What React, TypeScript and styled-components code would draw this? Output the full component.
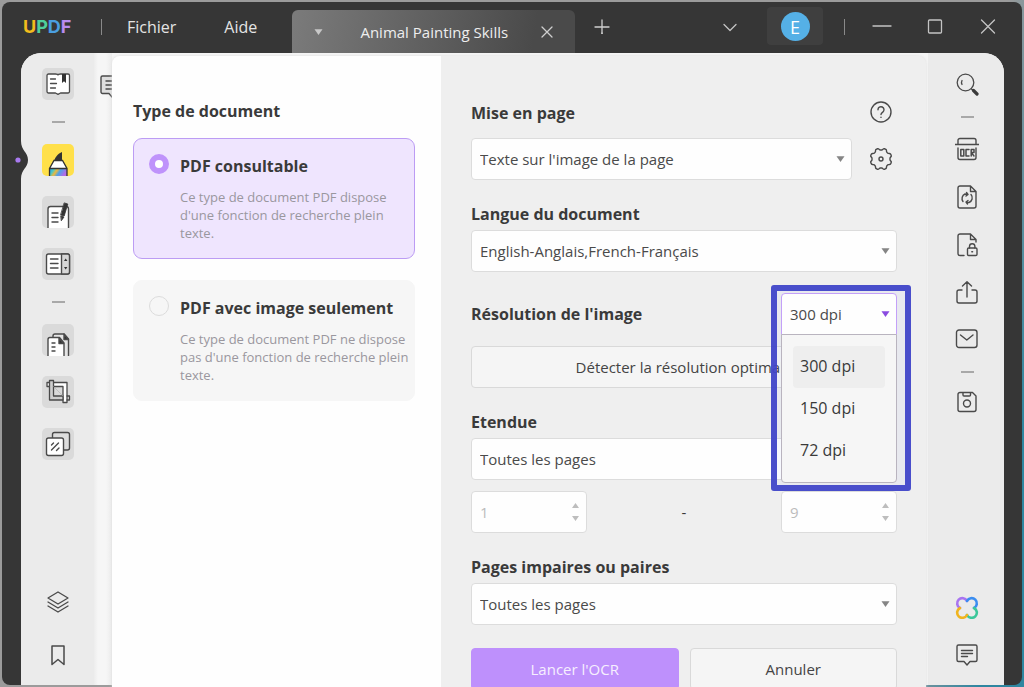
import React from "react";
import styled, { createGlobalStyle, css } from "styled-components";

const GlobalStyle = createGlobalStyle`
  *, *::before, *::after { box-sizing: border-box; }
  html, body { margin: 0; height: 100%; overflow: hidden; }
  body { font-family: "Open Sans", "Noto Sans", sans-serif; font-size: 15px; color: #3a3a3a; }
  button, select, input { font: inherit; color: inherit; margin: 0; }
  svg { display: block; }
`;

/* ---------- window ---------- */

const Desktop = styled.div`
  height: 100vh;
  padding: 2px;
  background: linear-gradient(100deg, #9b9b9b 0 88%, #2f86a0 96%);
`;

const AppWindow = styled.div`
  height: 100%;
  display: flex;
  flex-direction: column;
  background: #363636;
  border-radius: 8px;
`;

const TitleBar = styled.header`
  display: flex;
  align-items: stretch;
  height: 51px;
  flex: none;
  padding: 0 14px 0 21px;
  color: #e4e4e4;
`;

const Logo = styled.div`
  width: 53px;
  font-family: Inter, sans-serif;
  font-weight: 700;
  font-size: 18px;
  line-height: 50px;
`;

const LogoLetter = styled.span<{ $color: string }>`
  color: ${(p) => p.$color};
`;

const BarDivider = styled.span`
  width: 1px;
  height: 16px;
  margin: 17px 25px 0;
  background: #8a8a8a;
`;

const Menu = styled.nav`
  display: flex;
  gap: 48px;
  height: 50px;
`;

const bare = css`
  border: 0;
  padding: 0;
  background: none;
  cursor: pointer;
`;

const MenuButton = styled.button`
  ${bare}
  font-size: 16px;
`;

const Tab = styled.div`
  display: flex;
  align-items: center;
  width: 283px;
  margin: 8px 0 0 35px;
  padding: 0 22px;
  border-radius: 6px 6px 0 0;
  background: linear-gradient(100deg, #7b7b7b, #4a4a4a 85%);
`;

const TabTitle = styled.span`
  flex: 1;
  padding-left: 5px;
  text-align: center;
  white-space: nowrap;
  color: #eeeeee;
`;

const BarButton = styled.button<{ $w: number }>`
  ${bare}
  width: ${(p) => p.$w}px;
  height: 48px;
  display: grid;
  place-items: center;
`;

const TabButton = styled(BarButton)`
  height: 42px;
`;

const Spacer = styled.div`
  flex: 1;
`;

const Account = styled.button`
  ${bare}
  width: 56px;
  height: 38px;
  margin: 5px 0 0 20px;
  border-radius: 4px;
  background: #3f3f3f;
  display: grid;
  place-items: center;
`;

const Avatar = styled.span`
  width: 29px;
  height: 29px;
  border-radius: 50%;
  background: #55b0e6;
  color: #ffffff;
  font-size: 18px;
  line-height: 30px;
`;

const WindowDivider = styled(BarDivider)`
  margin: 17px 17px 0 21px;
`;

const WindowControls = styled.div`
  display: flex;
  gap: 13px;
`;

/* ---------- body ---------- */

const Body = styled.div`
  flex: 1;
  min-height: 0;
  display: flex;
  margin: 0 18px 0 19px;
  border-radius: 20px 20px 0 0;
  background: #f5f5f5;
  position: relative;
`;

const Rail = styled.aside<{ $side: "left" | "right" }>`
  flex: none;
  display: flex;
  flex-direction: column;
  align-items: center;
  background: #ebebeb;
  ${(p) =>
    p.$side === "left"
      ? css`
          width: 73px;
          padding: 15px 0 18px 1px;
          gap: 20px;
          border-top-left-radius: 20px;
        `
      : css`
          width: 76px;
          margin-left: 2px;
          padding: 20px 0 18px 2px;
          gap: 24px;
          border-top-right-radius: 20px;
        `}
`;

const RailGroup = styled.div`
  display: flex;
  flex-direction: column;
  gap: 29px;
`;

const RailDivider = styled.hr<{ $pull?: number }>`
  width: 13px;
  height: 2px;
  flex: none;
  margin: ${(p) => (p.$pull ? -p.$pull : 1)}px 0;
  border: 0;
  background: #a8a8a8;
`;

const Tile = styled.button<{ $bg?: string }>`
  ${bare}
  flex: none;
  width: 32px;
  height: 32px;
  border-radius: 5px;
  background: ${(p) => p.$bg ?? "#dadada"};
  overflow: hidden;
`;

const RailButton = styled.button`
  ${bare}
  flex: none;
  width: 24px;
  height: 24px;
`;

const Notch = styled.button`
  ${bare}
  position: absolute;
  left: -7px;
  top: 88px;
  width: 16px;
  height: 38px;
`;

const DocStrip = styled.div`
  flex: none;
  width: 18px;
  padding: 21px 0 0 6px;
  overflow: hidden;
  background: linear-gradient(90deg, #ededed, #f6f6f6 4px 12px, #ececec);
`;

/* ---------- dialog ---------- */

const Dialog = styled.main`
  flex: 1;
  min-width: 0;
  display: grid;
  grid-template-columns: 329fr 485fr;
  margin: 3px 0 -2px;
  border-radius: 8px 8px 0 0;
  background: #efefef;
  box-shadow: 0 0 3px #dedede;
  z-index: 1;
`;

const TypePane = styled.section`
  min-width: 0;
  padding: 43px 26px 0 21px;
  background: #fefefe;
  border-top-left-radius: 8px;
`;

const FormPane = styled.form`
  min-width: 0;
  padding: 45px 29px 0 30px;
`;

const heading = css`
  display: block;
  margin: 0;
  font-size: 16px;
  font-weight: 700;
  line-height: 24px;
  color: #3a3a3a;
  white-space: nowrap;
`;

const Title = styled.h2`
  ${heading}
`;

const Label = styled.label`
  ${heading}
`;

const Card = styled.label<{ $selected?: boolean }>`
  display: flex;
  align-items: flex-start;
  gap: 11px;
  height: 121px;
  margin-top: 21px;
  padding: 15px 5px 0 15px;
  border: 1px solid ${(p) => (p.$selected ? "#bc9cf4" : "#f6f6f6")};
  border-radius: 9px;
  background: ${(p) => (p.$selected ? "#efe5fe" : "#f6f6f6")};
  cursor: pointer;
`;

const FirstCard = styled(Card)`
  margin-top: 15px;
`;

const Radio = styled.input`
  appearance: none;
  flex: none;
  width: 20px;
  height: 20px;
  border: 1px solid #dcdcdc;
  border-radius: 50%;
  &:checked {
    border: 6px solid #bf93fb;
    background: #ffffff;
  }
`;

const CardText = styled.span`
  min-width: 0;
`;

const CardTitle = styled.span`
  ${heading}
`;

const CardNote = styled.span`
  display: block;
  margin-top: 10px;
  font-size: 13px;
  line-height: 18px;
  color: #9a979e;
`;

const Row = styled.div<{ $top?: number }>`
  display: flex;
  align-items: center;
  justify-content: space-between;
  gap: 11px;
  margin-top: ${(p) => p.$top ?? 0}px;
`;

const Field = styled.div`
  margin-top: 22px;
`;

const IconButton = styled.button`
  ${bare}
  flex: none;
  width: 24px;
  height: 24px;
  margin: 0 4px 0 6px;
`;

const boxed = css`
  width: 100%;
  height: 42px;
  border: 1px solid #dcdcdc;
  border-radius: 4px;
  background: #fefefe;
`;

const SelectWrap = styled.div<{ $top?: number; $w?: number; $raised?: boolean }>`
  display: grid;
  align-items: center;
  flex: ${(p) => (p.$w ? "none" : 1)};
  ${(p) => p.$w && `width: ${p.$w}px;`}
  margin-top: ${(p) => p.$top ?? 0}px;
  position: relative;
  z-index: ${(p) => (p.$raised ? 2 : "auto")};
  > select, > input, > svg { grid-area: 1 / 1; position: relative; }
  > svg { justify-self: end; margin-right: 7px; pointer-events: none; }
`;

const Select = styled.select<{ $open?: boolean }>`
  ${boxed}
  appearance: none;
  padding: 0 24px 0 8px;
  color: #4a4a4a;
  ${(p) =>
    p.$open &&
    css`
      border-color: #c3a0f8;
      border-radius: 4px 4px 0 0;
    `}
`;

const NumberInput = styled.input`
  ${boxed}
  padding: 0 24px 0 8px;
  color: #bcbcbc;
`;

const Button = styled.button<{ $primary?: boolean; $top?: number }>`
  ${boxed}
  margin-top: ${(p) => p.$top ?? 0}px;
  background: ${(p) => (p.$primary ? "#be90fc" : "#f5f5f5")};
  border-color: ${(p) => (p.$primary ? "#be90fc" : "#d9d9d9")};
  color: ${(p) => (p.$primary ? "#f6effe" : "#444444")};
  cursor: pointer;
`;

const Highlight = styled.div`
  position: absolute;
  inset: -8px -14px -156px -10px;
  border: 6px solid #3f44c8f2;
  border-radius: 3px;
  background: #4060ff0a;
  pointer-events: none;
`;

const Popup = styled.ul`
  position: absolute;
  top: 41px;
  left: 0;
  right: 0;
  margin: 0;
  padding: 11px;
  height: 149px;
  list-style: none;
  border: 1px solid #b9b4bf;
  border-radius: 0 0 4px 4px;
  background: #f6f6f6;
`;

const Option = styled.li<{ $active?: boolean }>`
  height: 42px;
  padding-left: 7px;
  border-radius: 4px;
  font-size: 16px;
  line-height: 40px;
  background: ${(p) => (p.$active ? "#eeeeee" : "transparent")};
`;

/* ---------- glyphs ---------- */

const Caret = ({ color = "#858585" }: { color?: string }) => (
  <svg width="9" height="6" viewBox="0 0 9 6">
    <path d="M.5 .3h8L4.500 6z" fill={color} />
  </svg>
);

const Spin = () => (
  <svg width="9" height="20" viewBox="0 0 9 20">
    <path d="M1 6h7L4.500 1zM1 14h7l-3.500 5z" fill="#bdbdbd" />
  </svg>
);

const Line = ({
  size = 24,
  width = 1.3,
  color = "#4a4a4a",
  children,
}: {
  size?: number;
  width?: number;
  color?: string;
  children: React.ReactNode;
}) => (
  <svg
    width={size}
    height={size}
    viewBox={`0 0 ${size} ${size}`}
    fill="none"
    stroke={color}
    strokeWidth={width}
    strokeLinecap="round"
    strokeLinejoin="round"
  >
    {children}
  </svg>
);

const ReaderIcon = () => (
  <Line size={32}>
    <path d="M6.500 6h7q2.500 0 2.500 1 0-1 2.500-1H26a1.500 1.500 0 0 1 1.500 1.500v16A1.500 1.500 0 0 1 26 25h-7.500L16 26.300 13.500 25h-7A1.500 1.500 0 0 1 5 23.500v-16A1.500 1.500 0 0 1 6.500 6z" fill="#fff" />
    <path d="M8.500 11h5M8.500 15.500h6M8.500 20h5" />
    <path d="M20 6h4v9l-2-1.700L20 15z" fill="#333" stroke="none" />
  </Line>
);

const MarkerIcon = () => (
  <svg width="32" height="32" viewBox="0 0 32 32">
    <defs>
      <linearGradient id="ink" x1="0" y1="0" x2="1" y2="0.3">
        <stop offset="0" stopColor="#2f8fe6" />
        <stop offset=".25" stopColor="#45c9c9" />
        <stop offset=".45" stopColor="#f0b83a" />
        <stop offset=".65" stopColor="#4da3e8" />
        <stop offset="1" stopColor="#b26be8" />
      </linearGradient>
    </defs>
    <path d="M7.500 24.500h17.500V32H7.500z" fill="url(#ink)" />
    <path d="M12 16.500h8.500l4.500 8H7.500z" fill="#fff" />
    <path d="M7.500 32v-7.500l4.500-8h8.500l4.500 8V32M7.500 24.500H25" fill="none" stroke="#333" strokeWidth="1.300" />
    <path d="M12 17c1-3.500 4-7.500 8-9v9z" fill="#333" />
  </svg>
);

const EditIcon = () => (
  <Line size={32} width={1.4}>
    <path d="M6 33V13a2.500 2.500 0 0 1 2.500-2.500H24a2.500 2.500 0 0 1 2.500 2.500v20" fill="#fff" />
    <path d="M10 17h6M10 21.500h6M10 26h6" />
    <path d="M22.500 7l3.300 1-3.600 12-3.300-1zM19 20l3 1-2.500 3.500z" fill="#333" stroke="#333" strokeWidth=".8" />
  </Line>
);

const FormIcon = () => (
  <Line size={32} width={1.4}>
    <rect x="4.500" y="6" width="23" height="20" rx="2" fill="#fff" />
    <path d="M19.500 6h6a2 2 0 0 1 2 2v16a2 2 0 0 1-2 2h-6z" fill="#d6d6d6" />
    <path d="M8.500 11h7.500M8.500 15.500h7.500M8.500 20h7.500" />
    <path d="M22 13l1.700-2.500 1.700 2.500zM22 19l1.700 2.500 1.700-2.500z" fill="#333" stroke="none" />
  </Line>
);

const PagesIcon = () => (
  <Line size={32} width={1.4}>
    <path d="M11 13V12a2 2 0 0 1 2-2h9l4.500 5v18H11z" fill="#e4e4e4" />
    <path d="M22 10l4.500 5.500H22z" fill="#333" />
    <path d="M6 33V15.500a2 2 0 0 1 2-2h9.500l4.500 5.500v14" fill="#fff" />
    <path d="M17 14l4.500 5.500H17z" fill="#333" />
    <path d="M10 19h3M10 23h3M10 27h3" />
  </Line>
);

const CropIcon = () => (
  <Line size={32} width={1.3}>
    <path d="M5 6.500h20v20h-4V10.500H5z" fill="#fff" />
    <path d="M25 20h2.500v4H25" />
    <path d="M7.500 4.500h4V20H21v4H7.500z" fill="#cfcfcf" />
    <path d="M11.500 10.500l9.500 9.500" strokeWidth=".6" stroke="#b0b0b0" />
  </Line>
);

const StampIcon = () => (
  <Line size={32} width={1.4}>
    <rect x="10.500" y="4.500" width="17" height="17.500" rx="2" fill="#ddd" />
    <rect x="4.500" y="10" width="17" height="17.500" rx="2" fill="#fff" />
    <path d="M9.500 17l2-2M9.500 22l7-7M14.500 22.500l2.500-2.500" />
  </Line>
);

const LayersIcon = () => (
  <Line>
    <path d="M12 2L22 8l-10 6L2 8zM2 12l10 6 10-6M2 16l10 6 10-6" />
  </Line>
);

const BookmarkIcon = () => (
  <Line width={1.5}>
    <path d="M6 3h12v18.500l-6-5-6 5z" />
  </Line>
);

const CommentIcon = () => (
  <Line width={1.4}>
    <path d="M3.500 2h17a1.500 1.500 0 0 1 1.500 1.500v13.500a1.500 1.500 0 0 1-1.500 1.500H15l-3 3.500-3-3.500H3.500A1.500 1.500 0 0 1 2 17V3.500A1.500 1.500 0 0 1 3.500 2zM6.500 7.500h11M6.500 10.500h11M6.500 13.500h6" />
  </Line>
);

const StripIcon = () => (
  <Line width={1.4}>
    <path d="M2.500 2H20v18h-5l-3 3-3-3.500H2.500A1.500 1.500 0 0 1 1 18V3.500A1.500 1.500 0 0 1 2.500 2z" fill="#dedede" />
    <path d="M6 7h9M6 11h9M6 15h9" />
  </Line>
);

const SearchIcon = () => (
  <Line>
    <circle cx="10.500" cy="9.500" r="8.300" />
    <path d="M7 7.500q-1 2 0 4" />
    <path d="M16.500 16l2 2" />
    <path d="M18.500 17.500l3.500 3.500" strokeWidth="3.200" stroke="#3a3a3a" />
  </Line>
);

const OcrIcon = () => (
  <Line width={1.4}>
    <path d="M3 7.500v-4A2 2 0 0 1 5 1.500h14a2 2 0 0 1 2 2v4M0 7.500h24M3 11v9.500a2 2 0 0 0 2 2h14a2 2 0 0 0 2-2V11" />
    <path d="M5.800 12.500h3v6.500h-3zM14 12.500h-3v6.500h3M16.200 19v-6.500H19v3h-2.800l2.800 3.500" strokeWidth="1.500" />
  </Line>
);

const ConvertIcon = () => (
  <Line width={1.4}>
    <path d="M5 1h10.500L21 6.500V21a2 2 0 0 1-2 2H5a2 2 0 0 1-2-2V3a2 2 0 0 1 2-2zM15.500 1v5.500H21" />
    <path d="M8 16.500a5 5 0 0 1 2-7.500l3 .5M16 9.500a5 5 0 0 1-2 8l-3-.5M11.500 7.500l1.500 2-2 1.500M12.500 19L11 17l2-1.500" />
  </Line>
);

const ProtectIcon = () => (
  <Line width={1.4}>
    <path d="M9 22.500H5a2 2 0 0 1-2-2V3a2 2 0 0 1 2-2h10.500L21 6.500V9M15.500 1v5.500H21" />
    <rect x="12.500" y="15" width="9.500" height="7.500" rx="1.200" />
    <path d="M14.500 15v-1.500a2.700 2.700 0 0 1 5.400 0V15M16.800 18.700h.8" />
  </Line>
);

const ShareIcon = () => (
  <Line width={1.4}>
    <path d="M7 9H4a2 2 0 0 0-2 2v9a2 2 0 0 0 2 2h16a2 2 0 0 0 2-2v-9a2 2 0 0 0-2-2h-3M12 16V1M7.500 5L12 .8 16.500 5" />
  </Line>
);

const MailIcon = () => (
  <Line width={1.4}>
    <rect x="1.500" y="1" width="20.500" height="17.500" rx="2.500" />
    <path d="M5.500 6l6.300 5 6.200-5" />
  </Line>
);

const SaveIcon = () => (
  <Line width={1.4}>
    <path d="M5 1.500h12.500L21 5v13.500a2 2 0 0 1-2 2H5a2 2 0 0 1-2-2v-15a2 2 0 0 1 2-2zM8 1.500V4a1 1 0 0 0 1 1h5.500a1 1 0 0 0 1-1V1.500" />
    <circle cx="12" cy="12.500" r="3.500" />
  </Line>
);

const CloverIcon = () => (
  <Line width={2.6}>
    <path d="M5 13A5.200 5.200 0 1 1 12 6" stroke="#a874f0" />
    <path d="M12 6A5.200 5.200 0 1 1 19 13" stroke="#3b8df0" />
    <path d="M19 13A5.200 5.200 0 1 1 12 20" stroke="#3cc79a" />
    <path d="M12 20A5.200 5.200 0 1 1 5 13" stroke="#f0b41e" />
  </Line>
);

const HelpIcon = () => (
  <Line width={1.4}>
    <circle cx="12" cy="11" r="10" />
    <path d="M9 8.800a3 3 0 1 1 4.800 2.300c-1.100.8-1.800 1.300-1.800 2.400M12 16.200v.2" />
  </Line>
);

const gearPath = (() => {
  const points = Array.from({ length: 96 }, (_, i) => {
    const a = (i / 96) * Math.PI * 2;
    const r = 9.9 + 0.95 * Math.tanh(2 * Math.cos(8 * a + Math.PI));
    return `${(12 + r * Math.cos(a)).toFixed(2)} ${(12 + r * Math.sin(a)).toFixed(2)}`;
  });
  return `M${points.join("L")}Z`;
})();

const GearIcon = () => (
  <Line width={1.4}>
    <path d={gearPath} />
    <circle cx="12" cy="12" r="2" />
  </Line>
);

/* ---------- page ---------- */

export default function App() {
  return (
    <>
      <GlobalStyle />
      <Desktop>
        <AppWindow>
          <TitleBar>
            <Logo>
              <LogoLetter $color="#f2bd1d">U</LogoLetter>
              <LogoLetter $color="#4fcf9b">P</LogoLetter>
              <LogoLetter $color="#4a9fe0">D</LogoLetter>
              <LogoLetter $color="#b98cf0">F</LogoLetter>
            </Logo>
            <BarDivider />
            <Menu>
              <MenuButton>Fichier</MenuButton>
              <MenuButton>Aide</MenuButton>
            </Menu>
            <Tab>
              <Caret color="#c8c8c8" />
              <TabTitle>Animal Painting Skills</TabTitle>
              <TabButton $w={13} aria-label="Fermer l'onglet">
                <Line size={12} color="#cfcfcf">
                  <path d="M1 1l10 10M11 1L1 11" />
                </Line>
              </TabButton>
            </Tab>
            <BarButton $w={54} aria-label="Nouvel onglet">
              <Line size={16} color="#cfcfcf">
                <path d="M8 1v14M1 8h14" transform="translate(0 1)" />
                <path d="M8 15v2" />
              </Line>
            </BarButton>
            <Spacer />
            <BarButton $w={34} aria-label="Plus">
              <Line size={16} color="#c4c4c4">
                <path d="M2 6.500l6 6 6-6" />
              </Line>
            </BarButton>
            <Account aria-label="Compte">
              <Avatar>E</Avatar>
            </Account>
            <WindowDivider />
            <WindowControls>
              <BarButton $w={40} aria-label="Réduire">
                <Line size={20} color="#c4c4c4">
                  <path d="M1 10h18" />
                </Line>
              </BarButton>
              <BarButton $w={40} aria-label="Agrandir">
                <Line size={16} color="#c4c4c4">
                  <rect x="1.500" y="2" width="13" height="13" rx="1" />
                </Line>
              </BarButton>
              <BarButton $w={40} aria-label="Fermer">
                <Line size={16} color="#c4c4c4">
                  <path d="M1.500 2l13 13M14.500 2l-13 13" />
                </Line>
              </BarButton>
            </WindowControls>
          </TitleBar>

          <Body>
            <Rail $side="left">
              <Tile aria-label="Lecteur"><ReaderIcon /></Tile>
              <RailDivider />
              <Tile $bg="#ffe04a" aria-label="Commentaire"><MarkerIcon /></Tile>
              <Tile aria-label="Modifier"><EditIcon /></Tile>
              <Tile aria-label="Formulaire"><FormIcon /></Tile>
              <RailDivider />
              <Tile aria-label="Pages"><PagesIcon /></Tile>
              <Tile aria-label="Rogner"><CropIcon /></Tile>
              <Tile aria-label="Filigrane"><StampIcon /></Tile>
              <Spacer />
              <RailGroup>
                <RailButton aria-label="Calques"><LayersIcon /></RailButton>
                <RailButton aria-label="Signets"><BookmarkIcon /></RailButton>
              </RailGroup>
            </Rail>
            <DocStrip>
              <StripIcon />
            </DocStrip>

            <Dialog>
              <TypePane>
                <Title>Type de document</Title>
                <FirstCard $selected>
                  <Radio type="radio" name="type" defaultChecked />
                  <CardText>
                    <CardTitle>PDF consultable</CardTitle>
                    <CardNote>Ce type de document PDF dispose d'une fonction de recherche plein texte.</CardNote>
                  </CardText>
                </FirstCard>
                <Card>
                  <Radio type="radio" name="type" />
                  <CardText>
                    <CardTitle>PDF avec image seulement</CardTitle>
                    <CardNote>Ce type de document PDF ne dispose pas d'une fonction de recherche plein texte.</CardNote>
                  </CardText>
                </Card>
              </TypePane>

              <FormPane onSubmit={(e) => e.preventDefault()}>
                <Row>
                  <Label htmlFor="layout">Mise en page</Label>
                  <IconButton type="button" aria-label="Aide"><HelpIcon /></IconButton>
                </Row>
                <Row $top={13}>
                  <SelectWrap>
                    <Select id="layout">
                      <option>Texte sur l'image de la page</option>
                    </Select>
                    <Caret />
                  </SelectWrap>
                  <IconButton type="button" aria-label="Paramètres"><GearIcon /></IconButton>
                </Row>

                <Field>
                  <Label htmlFor="language">Langue du document</Label>
                  <SelectWrap $top={4}>
                    <Select id="language">
                      <option>English-Anglais,French-Français</option>
                    </Select>
                    <Caret />
                  </SelectWrap>
                </Field>

                <Row $top={21}>
                  <Label htmlFor="dpi">Résolution de l'image</Label>
                  <SelectWrap $w={116} $raised>
                    <Highlight />
                    <Select id="dpi" $open>
                      <option>300 dpi</option>
                    </Select>
                    <Caret color="#8a4be0" />
                    <Popup role="listbox" aria-label="Résolution">
                      <Option role="option" aria-selected $active>300 dpi</Option>
                      <Option role="option">150 dpi</Option>
                      <Option role="option">72 dpi</Option>
                    </Popup>
                  </SelectWrap>
                </Row>
                <Button type="button" $top={11}>Détecter la résolution optimale</Button>

                <Field>
                  <Label htmlFor="range">Etendue</Label>
                  <SelectWrap $top={4}>
                    <Select id="range">
                      <option>Toutes les pages</option>
                    </Select>
                    <Caret />
                  </SelectWrap>
                </Field>
                <Row $top={11}>
                  <SelectWrap $w={116}>
                    <NumberInput aria-label="Première page" defaultValue="1" />
                    <Spin />
                  </SelectWrap>
                  <span>-</span>
                  <SelectWrap $w={116}>
                    <NumberInput aria-label="Dernière page" defaultValue="9" />
                    <Spin />
                  </SelectWrap>
                </Row>

                <Field>
                  <Label htmlFor="parity">Pages impaires ou paires</Label>
                  <SelectWrap $top={4}>
                    <Select id="parity">
                      <option>Toutes les pages</option>
                    </Select>
                    <Caret />
                  </SelectWrap>
                </Field>

                <Row $top={23}>
                  <Button type="submit" $primary>Lancer l'OCR</Button>
                  <Button type="button">Annuler</Button>
                </Row>
              </FormPane>
            </Dialog>

            <Rail $side="right">
              <RailButton aria-label="Rechercher"><SearchIcon /></RailButton>
              <RailDivider $pull={5} />
              <RailButton aria-label="OCR"><OcrIcon /></RailButton>
              <RailButton aria-label="Convertir"><ConvertIcon /></RailButton>
              <RailButton aria-label="Protéger"><ProtectIcon /></RailButton>
              <RailButton aria-label="Partager"><ShareIcon /></RailButton>
              <RailButton aria-label="Courriel"><MailIcon /></RailButton>
              <RailDivider $pull={6} />
              <RailButton aria-label="Enregistrer"><SaveIcon /></RailButton>
              <Spacer />
              <RailButton aria-label="UPDF AI"><CloverIcon /></RailButton>
              <RailButton aria-label="Commentaires"><CommentIcon /></RailButton>
            </Rail>

            <Notch aria-label="Masquer la barre">
              <svg width="16" height="38" viewBox="0 0 16 38">
                <path d="M6 0h1c0 10 7 11 7 19s-7 9-7 19H6z" fill="#363636" />
                <circle cx="4" cy="19" r="2.600" fill="#a97af0" />
              </svg>
            </Notch>
          </Body>
        </AppWindow>
      </Desktop>
    </>
  );
}
